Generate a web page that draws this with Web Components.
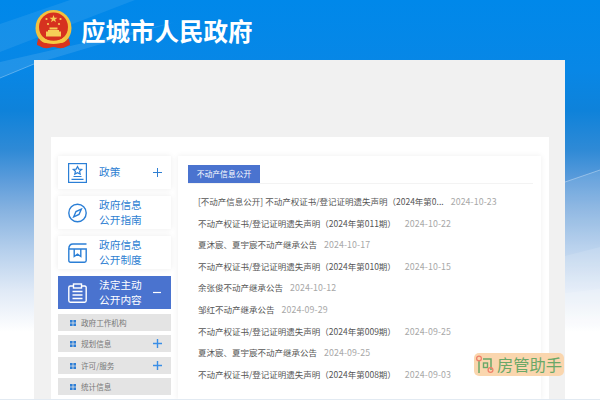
<!DOCTYPE html>
<html><head><meta charset="utf-8"><style>
html,body{margin:0;padding:0;height:400px;overflow:hidden}
body{font-family:"Noto Sans CJK SC","Liberation Sans",sans-serif}
</style></head><body>
<gov-page>
  <gov-header slot="header" title-text="应城市人民政府"></gov-header>
  <side-nav slot="side">
    <nav-card label="政策" icon="policy" sign="plus"></nav-card>
    <nav-card label="政府信息<br>公开指南" icon="compass"></nav-card>
    <nav-card label="政府信息<br>公开制度" icon="box"></nav-card>
    <nav-card label="法定主动<br>公开内容" icon="clip" sign="minus" active></nav-card>
    <sub-item>政府工作机构</sub-item>
    <sub-item plus style="margin-bottom:5px">规划信息</sub-item>
    <sub-item plus>许可/服务</sub-item>
    <sub-item>统计信息</sub-item>
  </side-nav>
  <news-list slot="main" heading="不动产信息公开">
    <news-row date="2024-10-23" style="--g:7px">[不动产信息公开] 不动产权证书/登记证明遗失声明（2024年第0...</news-row>
    <news-row date="2024-10-22" style="--g:9px">不动产权证书/登记证明遗失声明（2024年第011期）</news-row>
    <news-row date="2024-10-17">夏沐宸、夏宇宸不动产继承公告</news-row>
    <news-row date="2024-10-15" style="--g:9px">不动产权证书/登记证明遗失声明（2024年第010期）</news-row>
    <news-row date="2024-10-12">余张俊不动产继承公告</news-row>
    <news-row date="2024-09-29">邹红不动产继承公告</news-row>
    <news-row date="2024-09-25" style="--g:9px">不动产权证书/登记证明遗失声明（2024年第009期）</news-row>
    <news-row date="2024-09-25">夏沐宸、夏宇宸不动产继承公告</news-row>
    <news-row date="2024-09-03" style="--g:9px">不动产权证书/登记证明遗失声明（2024年第008期）</news-row>
  </news-list>
  <helper-badge slot="overlay"></helper-badge>
</gov-page>
<script>
function def(name,css,html){
  customElements.define(name,class extends HTMLElement{
    connectedCallback(){
      if(this.shadowRoot)return;
      const r=this.attachShadow({mode:'open'});
      r.innerHTML='<style>'+css+'</style>'+(typeof html==='function'?html(this):html);
    }
  });
}
const signs={
plus:(c,w=1)=>`<svg class="sg" viewBox="0 0 9 9" fill="none" stroke="${c}" stroke-width="${w}"><path d="M0 4.500h9M4.500 0v9"/></svg>`,
minus:c=>`<svg class="sg" viewBox="0 0 9 9" fill="none" stroke="${c}" stroke-width="1.200"><path d="M0 4.500h8"/></svg>`};
def('gov-page',`
:host{display:block;width:600px;height:400px;position:relative;overflow:hidden;
 background:linear-gradient(180deg,#0088ea 0,#0887e6 70px,#0e82da 110px,#2f8ad6 150px,#5c9cdb 180px,#86b2e0 210px,#b5cfec 250px,#dfe9f6 290px,#fff 332px);}
.streak{position:absolute;left:0;top:0;width:600px;height:400px}
.wrap{position:relative;display:flex;flex-direction:column;height:400px}
.panel{width:531px;margin-left:34px;height:339px;flex:none;background:#f1f1f1;padding:77px 16px 0 17px;box-sizing:border-box}
.inner{background:#fff;height:100%;display:flex;gap:7px;padding:19px 8px 0 7px;box-sizing:border-box}
.foot{flex:1;background:#e2eaf2}
`,`
<svg class="streak" viewBox="0 0 600 400" aria-hidden="true">
<path d="M0 24 L70 0 H135 L0 52Z" fill="#fff" opacity=".08"/>
<path d="M0 78 L34 64 L175 22 L0 62Z" fill="#fff" opacity=".1"/>
<path d="M0 78 L34 64" stroke="#fff" stroke-opacity=".3" fill="none"/>
<path d="M565 182 L600 170 V400 H565Z" fill="#fff" opacity=".1"/>
<path d="M565 182 L600 170" stroke="#fff" stroke-opacity=".35" fill="none"/>
<path d="M565 256 L600 247 V400 H565Z" fill="#fff" opacity=".12"/>
<path d="M565 293 L600 289 V400 H565Z" fill="#fff" opacity=".15"/>
</svg>
<div class="wrap"><slot name="header"></slot>
<div class="panel"><div class="inner"><slot name="side"></slot><slot name="main"></slot></div></div><div class="foot"></div></div>
<slot name="overlay"></slot>`);

def('gov-header',`
:host{display:flex;flex:none;align-items:center;height:60px;padding-left:35px;gap:9px;box-sizing:border-box}
svg{display:block;width:37px;height:39px;flex:none;margin-top:-2px}
h1{margin:0;font:700 24.500px/30px "Noto Sans CJK SC",sans-serif;color:#fff;margin-top:1px;white-space:nowrap}
`,h=>`<svg viewBox="0 0 37 39" aria-hidden="true">
<path d="M3 28 C6 32 12 34 18.500 34 C25 34 31 32 34 28 L35 35 C31 36 30 38 27 38 C24 39 22 37 18.500 37 C15 37 13 39 10 38 C7 38 6 36 2 35Z" fill="#d9341f"/>
<circle cx="18.500" cy="18" r="18" fill="#f4c23d"/>
<circle cx="18.500" cy="17" r="14.500" fill="#d6321f"/>
<path d="M4 29 C8 34 12 33 18.500 33 C25 33 29 34 33 29 L35 34 C30 38 24 36 18.500 36 C13 36 7 38 2 34Z" fill="#d9341f"/>
<path d="M8 27 C12 32 25 32 29 27 L30.500 31 C24 35 13 35 6.500 31Z" fill="#f6c845"/>
<path d="M13 20h11v1.500h2v5H11v-5h2z" fill="#f6cf57"/>
<rect x="14.500" y="17.500" width="8" height="2" fill="#f6cf57"/>
<path d="M18.500 5l1 2.800h3l-2.400 1.700.9 2.800-2.500-1.700-2.500 1.700.9-2.800-2.400-1.700h3z" fill="#f6cf57"/>
<circle cx="11.500" cy="9" r="1.100" fill="#f6cf57"/><circle cx="25.500" cy="9" r="1.100" fill="#f6cf57"/>
<circle cx="13" cy="14" r="1.100" fill="#f6cf57"/><circle cx="24" cy="14" r="1.100" fill="#f6cf57"/>
</svg><h1>${h.getAttribute('title-text')}</h1>`);

def('side-nav',`:host{display:flex;flex-direction:column;width:113px;flex:none}`,`<slot></slot>`);

const icons={
policy:`<svg viewBox="0 0 19 20" fill="none" stroke="#2b7fd6" stroke-width="1.200"><rect x=".6" y=".6" width="17.800" height="18.800"/><path d="M9.500 3.500l1.300 2.600 2.900.3-2.100 1.900.6 2.800-2.700-1.400-2.700 1.400.6-2.800-2.100-1.900 2.900-.3z"/><path d="M5.500 13.500h8M3.500 16.300h12"/></svg>`,
compass:`<svg viewBox="0 0 19 20" fill="none" stroke="#2b7fd6" stroke-width="1.400"><circle cx="9.500" cy="10" r="8.700"/><path d="M13.300 6.200L11 11.500 5.700 13.800 8 8.500z"/></svg>`,
box:`<svg viewBox="0 0 19 20" fill="none" stroke="#2b7fd6" stroke-width="1.400"><path d="M.8 6C.8 3 2.500 1 5 1H18.500M.8 6H18.200V17.500Q18.200 19.200 16.500 19.200H2.500Q.8 19.200 .8 17.500z"/><path d="M6.200 6v7.500l3.300-2.300 3.300 2.300V6"/></svg>`,
clip:`<svg viewBox="0 0 19 20" fill="none" stroke="#fff" stroke-width="1.400"><path d="M5.500 3H2.300C1.300 3 .8 3.600 .8 4.500V17.500C.8 18.500 1.300 19.200 2.300 19.200h14.400c1 0 1.500-.7 1.500-1.700V4.500C18.200 3.600 17.700 3 16.700 3H13.500"/><rect x="5.500" y="1" width="8" height="4"/><path d="M4.500 8.500h10M4.500 12h10M4.500 15.500h10"/></svg>`};
def('nav-card',`
:host{display:flex;align-items:center;flex:none;height:33px;margin-bottom:7px;background:#fff;box-shadow:0 0 6px rgba(0,0,0,.08);color:#2f7fd2;font-size:10.700px;line-height:14.500px;padding-left:10px;box-sizing:border-box}
:host([active]){background:#4a73cf;color:#fff;box-shadow:none;margin-bottom:5px}
svg{display:block;width:19px;height:20px;flex:none}
.t{margin-left:12px;flex:1;white-space:nowrap}
.sg{width:9px;height:9px;margin-right:9px;flex:none}
`,h=>{const s=h.getAttribute('sign'),a=h.hasAttribute('active');return `${icons[h.getAttribute('icon')]}<span class="t">${h.getAttribute('label')}</span>${s?signs[s](a?'#fff':'#2f7fd2'):''}`});

def('sub-item',`
:host{display:flex;align-items:center;flex:none;height:17px;margin-bottom:4px;background:#e4e4e4;color:#777;font-size:7.600px;padding-left:12px;box-sizing:border-box;white-space:nowrap}
.g{display:block;width:6px;height:6px;margin-right:5px;flex:none}
span.t{flex:1}
.sg{width:9px;height:9px;margin-right:9px;flex:none}
`,h=>`<svg class="g" viewBox="0 0 6 6" fill="#2f7fd6"><rect width="2.600" height="2.600"/><rect x="3.400" width="2.600" height="2.600"/><rect y="3.400" width="2.600" height="2.600"/><rect x="3.400" y="3.400" width="2.600" height="2.600"/></svg><span class="t"><slot></slot></span>${h.hasAttribute('plus')?signs.plus('#3a8ee6',1.4):''}`);

def('news-list',`
:host{display:block;width:363px;flex:none;height:100%;background:#fff;box-shadow:0 0 6px rgba(0,0,0,.07);padding:9px 8px 0 10px;box-sizing:border-box}
.h{border-bottom:1px solid #f3f3f3;height:18px}
.h span{display:block;width:72px;height:18px;background:#4a73cf;color:#fff;font-size:7.800px;line-height:18px;text-align:center}
.l{padding:7px 0 0 10px}
`,h=>`<div class="h"><span>${h.getAttribute('heading')}</span></div><div class="l"><slot></slot></div>`);

def('news-row',`
:host{display:flex;height:21.600px;line-height:21.600px;align-items:baseline;font-size:8.500px;color:#555;white-space:nowrap}
.d{color:#a8a8a8;margin-left:var(--g,7px);font-size:8.800px;letter-spacing:.1px}
`,h=>`<slot></slot><span class="d">${h.getAttribute('date')}</span>`);

def('helper-badge',`
:host{position:absolute;left:474px;top:353px;width:90px;height:23px;background:rgba(250,212,170,.95);border-radius:5px;display:flex;align-items:center;color:#6aa868;font-size:16.300px;line-height:23px;box-sizing:border-box;white-space:nowrap}
svg{width:23px;height:23px;display:block;flex:none}
`,`<svg viewBox="0 0 23 23" aria-hidden="true" fill="none"><path d="M5 7v13M9 6h8v11" stroke="#6aa868" stroke-width="1.500"/><rect x="9.500" y="10" width="4" height="4.500" stroke="#6aa868" stroke-width="1.400"/><circle cx="5" cy="5.500" r="2.400" stroke="#f0806a" stroke-width="1.300"/><circle cx="16.500" cy="17" r="2.400" stroke="#f0806a" stroke-width="1.300"/></svg><span>房管助手</span>`);
</script>
</body></html>
